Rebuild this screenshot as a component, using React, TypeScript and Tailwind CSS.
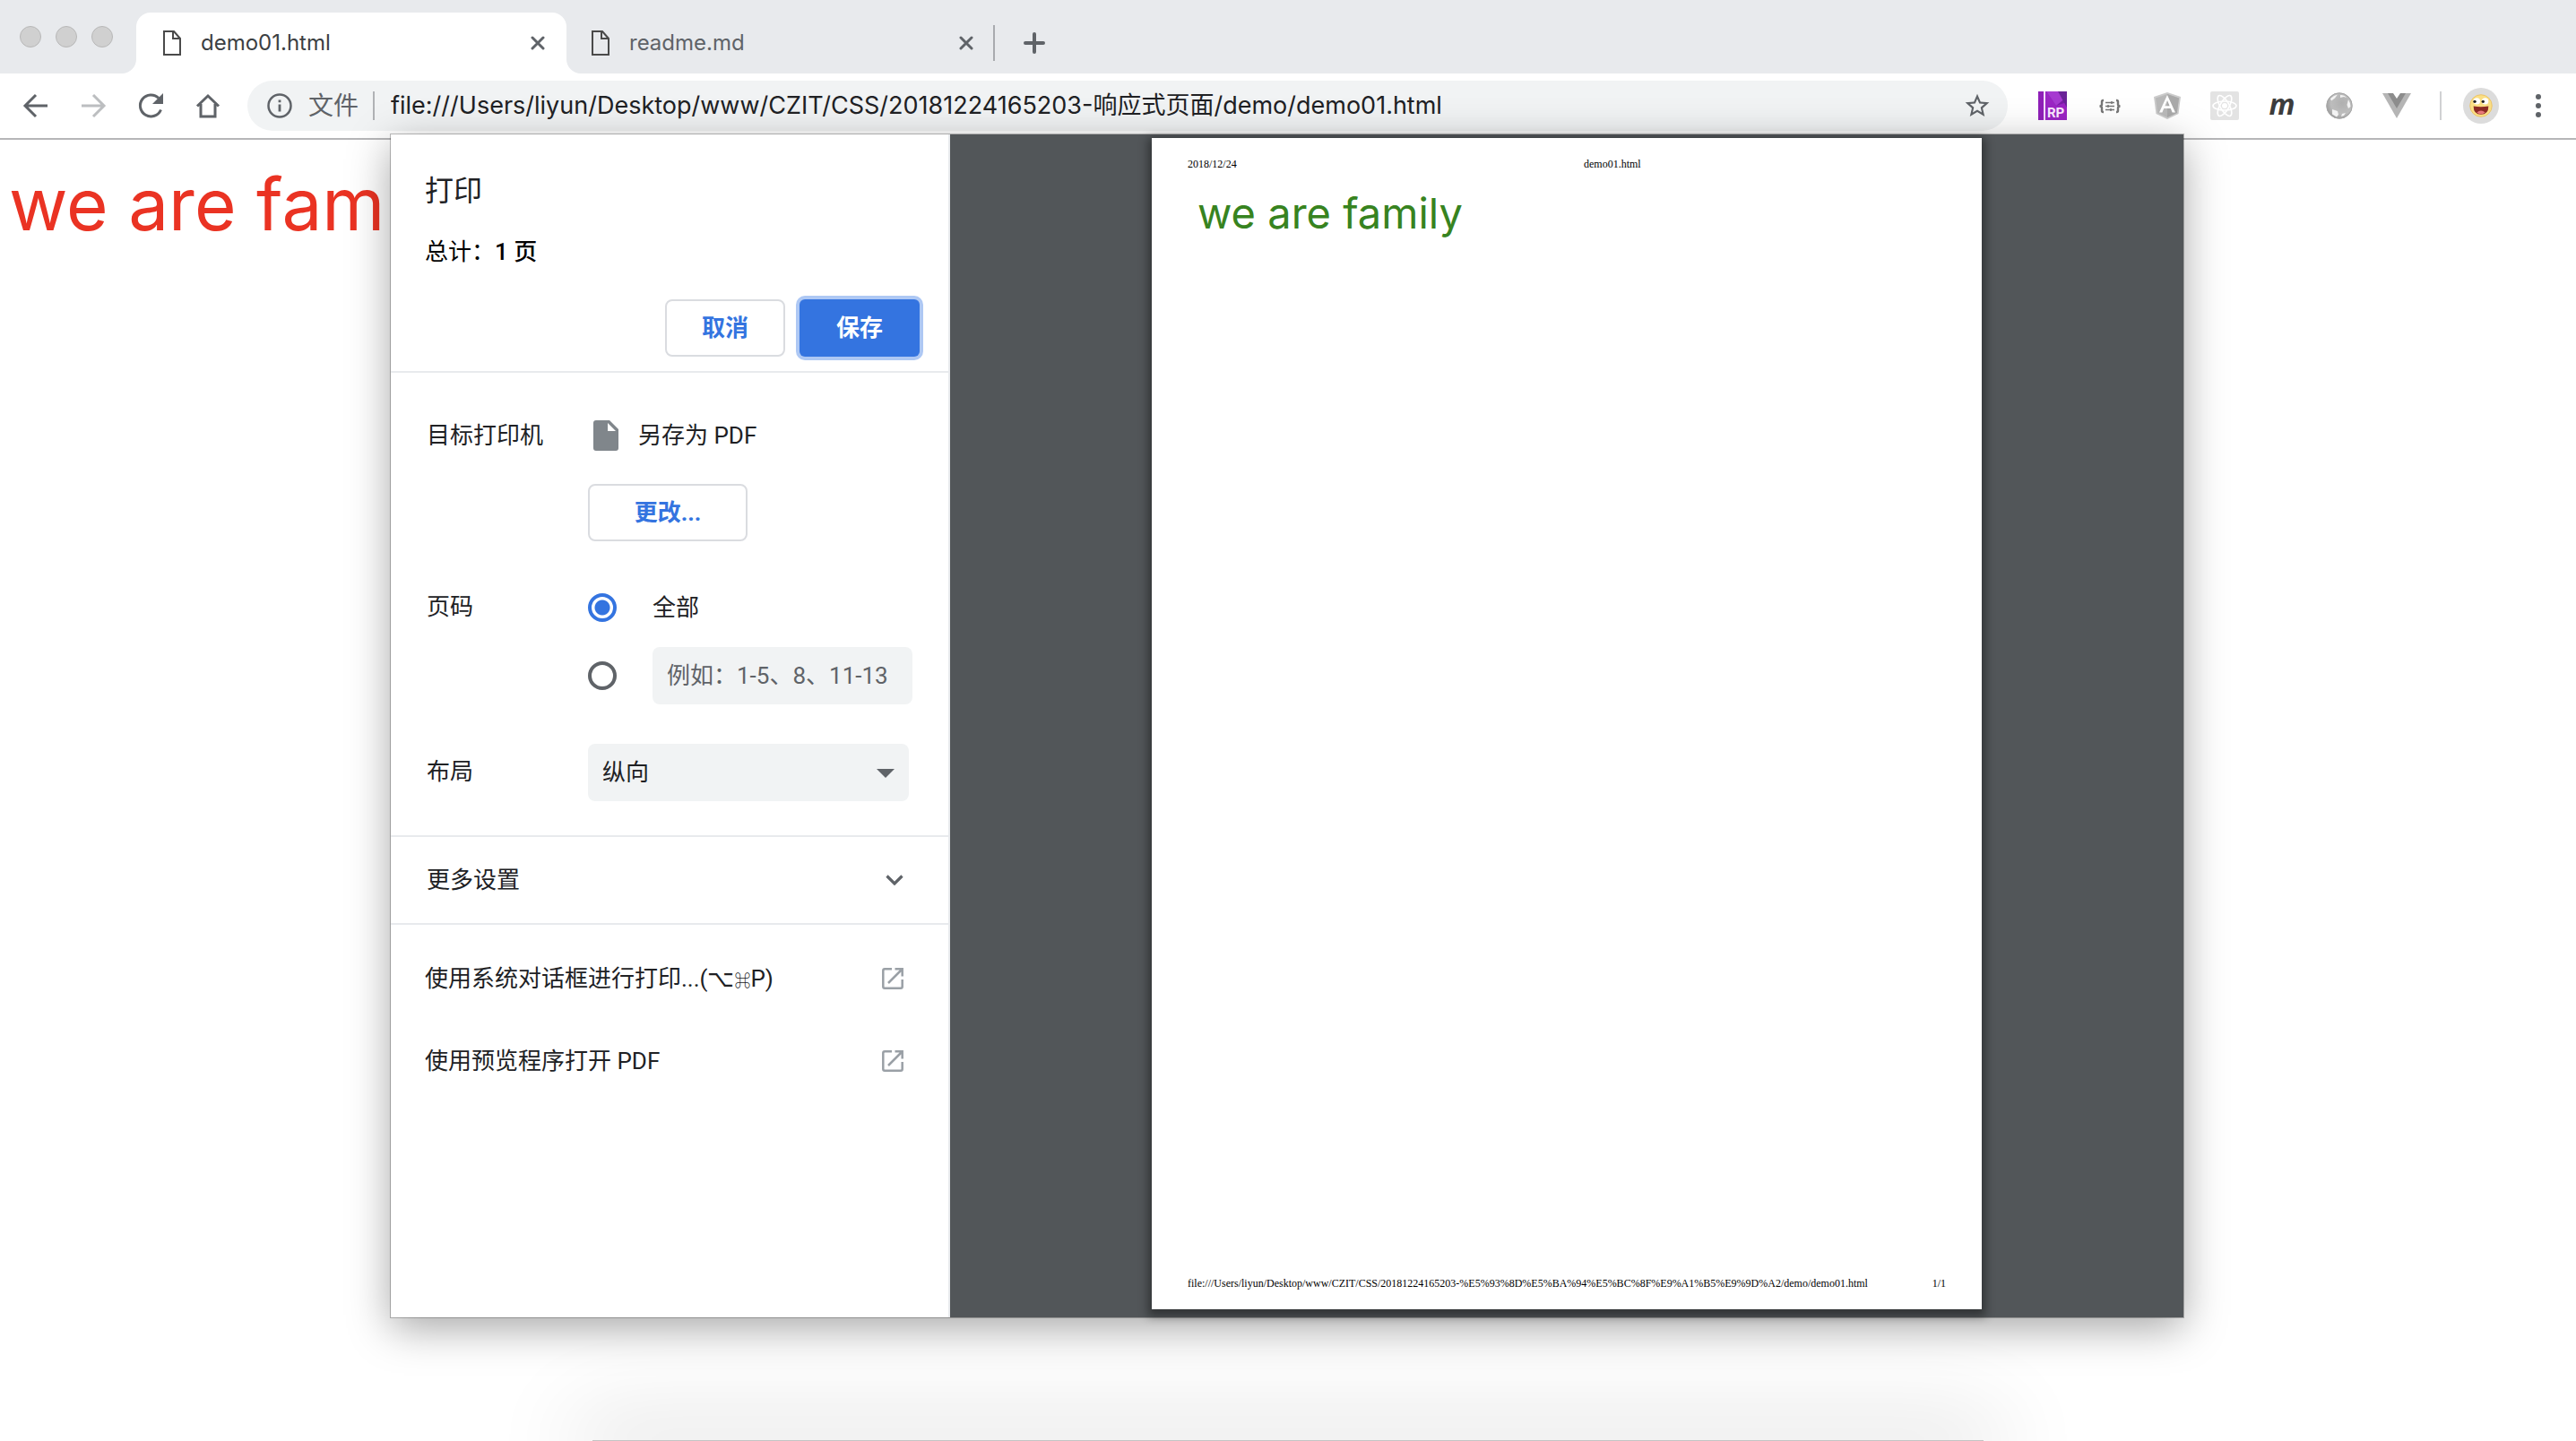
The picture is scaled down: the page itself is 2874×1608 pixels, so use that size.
import type { ReactNode } from "react";

const UI = "font-['Inter','Noto_Sans_CJK_SC',sans-serif]";

function PageIcon() {
  return (
    <svg className="h-7 w-5 shrink-0" viewBox="0 0 20 28" fill="none" stroke="#4a4a4a" strokeWidth="2">
      <path d="M1 1h11l7 8v18H1z" />
      <path d="M11 1v8h8" />
    </svg>
  );
}

function CloseIcon() {
  return (
    <svg className="h-4 w-4" viewBox="0 0 16 16" fill="none" stroke="#5f6368" strokeWidth="3" strokeLinecap="round">
      <path d="M2 2l12 12M14 2L2 14" />
    </svg>
  );
}

function Tab({ title, active }: { title: string; active?: boolean }) {
  return (
    <div className={active ? "relative flex h-[68px] w-[480px] items-center rounded-t-2xl bg-white pl-[30px] pr-6" : "flex h-[68px] w-[476px] items-center pl-7 pr-[22px]"}>
      {active && (
        <>
          <svg className="absolute bottom-0 -left-4 h-4 w-4" viewBox="0 0 16 16" fill="#fff"><path d="M16 0v16H0A16 16 0 0 0 16 0z" /></svg>
          <svg className="absolute bottom-0 -right-4 h-4 w-4" viewBox="0 0 16 16" fill="#fff"><path d="M0 0v16h16A16 16 0 0 1 0 0z" /></svg>
        </>
      )}
      <PageIcon />
      <span className={active ? "ml-[22px] flex-1 text-2xl text-[#3c4043]" : "ml-[22px] flex-1 text-2xl text-[#5f6368]"}>{title}</span>
      <button type="button" aria-label={`Close ${title}`}><CloseIcon /></button>
    </div>
  );
}

function TabStrip() {
  return (
    <header className="flex h-[82px] items-end bg-[#e8eaed]">
      <div className="flex h-full w-[152px] items-center gap-4 pl-[22px]">
        {["close", "minimize", "zoom"].map((n) => (
          <button key={n} type="button" aria-label={n} className="h-6 w-6 rounded-full border border-[#b8b8b8] bg-[#d0d0d0]" />
        ))}
      </div>
      <Tab title="demo01.html" active />
      <Tab title="readme.md" />
      <div className="flex h-[68px] items-center gap-8">
        <div className="h-10 w-0.5 bg-[#a9abaf]" />
        <button type="button" aria-label="New tab">
          <svg className="h-6 w-6" viewBox="0 0 24 24" stroke="#5f6368" strokeWidth="4" strokeLinecap="round"><path d="M12 2v20M2 12h20" /></svg>
        </button>
      </div>
    </header>
  );
}

function NavButton({ label, children }: { label: string; children: ReactNode }) {
  return <button type="button" aria-label={label} className="flex h-8 w-8 items-center justify-center">{children}</button>;
}

function ReactMark() {
  return (
    <svg className="h-8 w-8" viewBox="0 0 32 32">
      <rect width="32" height="32" rx="2" fill="#e3e3e3" />
      <g fill="none" stroke="#fff" strokeWidth="1.6">
        <ellipse cx="16" cy="16" rx="13" ry="5" />
        <ellipse cx="16" cy="16" rx="13" ry="5" transform="rotate(60 16 16)" />
        <ellipse cx="16" cy="16" rx="13" ry="5" transform="rotate(120 16 16)" />
      </g>
      <circle cx="16" cy="16" r="3" fill="#fff" />
    </svg>
  );
}

function Extensions() {
  return (
    <div className="flex items-center gap-8">
      <NavButton label="Axure RP">
        <svg className="h-8 w-8" viewBox="0 0 32 32">
          <rect width="32" height="32" fill="#9b25c4" />
          <path d="M9 0h23v12L20 16z" fill="#7a1fa6" />
          <path d="M9 0l11 16L32 6V0z" fill="#a63ad0" />
          <path d="M22 0h10v18z" fill="#6a2397" />
          <path d="M0 0h6v32H0z" fill="#8f1fb8" />
          <path d="M6 0h2v32H6z" fill="#f3dcfa" />
          <text x="10" y="29" fontFamily="Roboto" fontWeight="700" fontSize="15" fill="#fbeaff">RP</text>
        </svg>
      </NavButton>
      <NavButton label="JSON formatter">
        <svg className="h-8 w-8" viewBox="0 0 32 32" fill="none" stroke="#777" strokeWidth="2.400">
          <path d="M9 10H8.500q-1.500 0-1.500 1.500v3q0 2-2.500 2q2.500 0 2.500 2v3q0 1.500 1.500 1.500H9M23 10h.500q1.500 0 1.500 1.500v3q0 2 2.500 2q-2.500 0-2.500 2v3q0 1.500-1.500 1.500H23" />
          <path d="M11 12.500h10M11 16.500h10M11 20.500h10M18 11v3M14 15v3M17 19v3" strokeWidth="1.500" />
        </svg>
      </NavButton>
      <NavButton label="Angular">
        <svg className="h-8 w-8" viewBox="0 0 32 32">
          <path d="M16 1l15 5-2.500 19L16 31 3.500 25 1 6z" fill="#cbcbcb" />
          <path d="M16 3l13 4.500-2.200 16.500L16 29 5.200 24 3 7.500z" fill="#b9b9b9" />
          <path d="M16 3l13 4.500-2.200 16.500L16 29z" fill="#a9a9a9" />
          <path d="M16 4L7 23.500h3.400l1.800-4.500h7.600l1.800 4.500H25zM16 10l2.600 6.200h-5.200z" fill="#fff" />
        </svg>
      </NavButton>
      <NavButton label="React"><ReactMark /></NavButton>
      <NavButton label="m"><span className="pb-1 font-['Open_Sans',sans-serif] text-[32px] leading-8 font-bold italic text-[#3c3c3c]">m</span></NavButton>
      <NavButton label="Globe">
        <svg className="h-8 w-8" viewBox="0 0 32 32">
          <defs><radialGradient id="globe" cx="0.6" cy="0.4" r="0.7"><stop offset="0" stopColor="#b0b0b0" /><stop offset="0.6" stopColor="#bdbdbd" /><stop offset="1" stopColor="#929292" /></radialGradient></defs>
          <circle cx="16" cy="16" r="14.500" fill="url(#globe)" />
          <path d="M6 8q4-4 8-4.500l-3 4-4 3zM17 4q5 0 7 3l-3-1-4 1zM26 9q2.500 4 2.500 8l-2.500 2-1.500-4zM8 20l6 2 1 4-2 2.500-5-3zM19 25l4-1-2 3-3 1z" fill="#f3f3f3" />
          <circle cx="16" cy="16" r="14.200" fill="none" stroke="#a6a6a6" />
        </svg>
      </NavButton>
      <NavButton label="Vue">
        <svg className="h-7 w-8" viewBox="0 0 32 28">
          <path d="M0 0h32L16 28z" fill="#b5b5b5" />
          <path d="M6 0h20L16 17z" fill="#8c8c8c" />
          <path d="M12 0h8l-4 6z" fill="#fff" />
        </svg>
      </NavButton>
    </div>
  );
}

function Toolbar() {
  return (
    <div className="flex h-[74px] items-center border-b-2 border-[#b6b6b8] bg-white pl-6 pr-[26px]">
      <div className="flex gap-8">
        <NavButton label="Back">
          <svg className="h-8 w-8" viewBox="0 0 32 32" fill="none" stroke="#5f6368" strokeWidth="3"><path d="M29 16H5M16 4L4 16l12 12" /></svg>
        </NavButton>
        <NavButton label="Forward">
          <svg className="h-8 w-8" viewBox="0 0 32 32" fill="none" stroke="#bcbec0" strokeWidth="3"><path d="M3 16h24M16 4l12 12-12 12" /></svg>
        </NavButton>
        <NavButton label="Reload">
          <svg className="h-8 w-8" viewBox="0 0 32 32"><path d="M27.500 20.500A12 12 0 1 1 25 7.500" fill="none" stroke="#5f6368" strokeWidth="3" /><path d="M30 2v12H18z" fill="#5f6368" /></svg>
        </NavButton>
        <NavButton label="Home">
          <svg className="h-8 w-8" viewBox="0 0 32 32" fill="none" stroke="#5f6368" strokeWidth="3"><path d="M4 16.500L16 5l12 11.500M8 14v14h16V14" /></svg>
        </NavButton>
      </div>
      <div className="ml-7 flex h-14 flex-1 items-center rounded-full bg-[#f1f3f4] pl-[22px] pr-[18px]">
        <svg className="h-7 w-7 shrink-0" viewBox="0 0 28 28"><circle cx="14" cy="14" r="12.500" fill="none" stroke="#5f6368" strokeWidth="2.500" /><path d="M12.600 12.500h2.800v8h-2.800zM12.600 7.500h2.800v2.800h-2.800z" fill="#5f6368" /></svg>
        <span className="ml-[18px] text-[28px] text-[#5f6368]">文件</span>
        <div className="ml-4 h-8 w-0.5 bg-[#b0b2b5]" />
        <input aria-label="Address" className="ml-[18px] min-w-0 flex-1 bg-transparent text-[27px] text-[#202124] outline-none" defaultValue="file:///Users/liyun/Desktop/www/CZIT/CSS/20181224165203-响应式页面/demo/demo01.html" />
        <button type="button" aria-label="Bookmark">
          <svg className="h-8 w-8" viewBox="0 0 24 24" fill="#5f6368"><path d="M22 9.240l-7.190-.620L12 2 9.190 8.630 2 9.240l5.460 4.730L5.820 21 12 17.270 18.180 21l-1.630-7.030L22 9.240zM12 15.400l-3.760 2.270 1-4.280-3.320-2.880 4.380-.380L12 6.100l1.710 4.040 4.380.380-3.320 2.880 1 4.280L12 15.400z" /></svg>
        </button>
      </div>
      <div className="ml-[34px]"><Extensions /></div>
      <div className="ml-8 h-8 w-0.5 bg-[#d0d1d3]" />
      <button type="button" aria-label="Profile" className="ml-6 flex h-10 w-10 items-center justify-center rounded-full bg-[#dcdcdc]">
        <svg className="h-[26px] w-[26px]" viewBox="0 0 28 28">
          <circle cx="14" cy="14" r="13.200" fill="#fadf85" stroke="#ecc062" />
          <ellipse cx="9" cy="8.500" rx="4" ry="3.800" fill="#fff" /><ellipse cx="19" cy="8.500" rx="4" ry="3.800" fill="#fff" />
          <circle cx="6.500" cy="9" r="1.800" fill="#222" /><circle cx="16.500" cy="9" r="1.800" fill="#222" />
          <path d="M5 14.500q9 1.500 18 0q0 10-9 10t-9-10z" fill="#8c2a24" /><path d="M9 22q5-4 10 0-5 4-10 0z" fill="#e8787a" />
        </svg>
      </button>
      <button type="button" aria-label="Menu" className="ml-7 flex h-8 w-8 flex-col items-center justify-center gap-1">
        <span className="h-1.5 w-1.5 rounded-full bg-[#5f6368]" />
        <span className="h-1.5 w-1.5 rounded-full bg-[#5f6368]" />
        <span className="h-1.5 w-1.5 rounded-full bg-[#5f6368]" />
      </button>
    </div>
  );
}

function OpenIcon() {
  return (
    <svg className="h-6 w-6" viewBox="0 0 24 24" fill="none" stroke="#9aa0a6" strokeWidth="2.500">
      <path d="M11 1.300H3Q1.300 1.300 1.300 3v18q0 1.700 1.700 1.700h18q1.700 0 1.700-1.700v-8M7 17L22 2M14.500 1.300h8.200v8.200" />
    </svg>
  );
}

function OpenRow({ children }: { children: ReactNode }) {
  return (
    <button type="button" className="flex h-[92px] w-full items-center justify-between pl-[38px] pr-[50px] text-left">
      <span>{children}</span>
      <OpenIcon />
    </button>
  );
}

const RADIO = "h-8 w-8 shrink-0 appearance-none rounded-full border-4 border-[#5f6368] bg-white checked:border-[#3474e0] checked:bg-[radial-gradient(circle,#3474e0_8px,white_9px)]";
const OUTLINE = "h-16 rounded-lg border-2 border-[#dadce0] font-bold text-[#3474e0]";

function Settings() {
  return (
    <form className="flex w-[624px] shrink-0 flex-col border-r-2 border-[#e8eaed] bg-white font-['Roboto','Noto_Sans_CJK_SC',sans-serif] text-[26px] leading-8 text-[#202124]">
      <div className="flex h-[266px] flex-col border-b-2 border-[#e8eaed] pl-[38px] pr-[32px] pt-[43px]">
        <h1 className="text-[32px] leading-10">打印</h1>
        <p className="mt-8 text-black">总计：<b className="font-medium">1 页</b></p>
        <div className="mt-[37px] flex justify-end gap-4">
          <button type="button" className={`${OUTLINE} w-[134px]`}>取消</button>
          <button type="button" className="h-16 w-[134px] rounded-md bg-[#3474e0] font-bold text-white ring-4 ring-[#aec8f4]">保存</button>
        </div>
      </div>
      <div className="grid grid-cols-[180px_1fr] border-b-2 border-[#e8eaed] pl-10 pr-10 pt-[54px] pb-[38px]">
        <span>目标打印机</span>
        <div>
          <div className="flex h-8 items-center">
            <svg className="ml-1.5 h-[34px] w-7" viewBox="0 0 28 34"><path d="M3 0h15l10 10v21q0 3-3 3H3q-3 0-3-3V3q0-3 3-3z" fill="#80868b" /><path d="M16 3v9h9z" fill="#fff" /></svg>
            <span className="ml-[22px]">另存为 PDF</span>
          </div>
          <button type="button" className={`${OUTLINE} mt-[38px] w-[178px]`}>更改...</button>
        </div>
        <span className="mt-[57px]">页码</span>
        <div className="mt-[58px]">
          <label className="flex items-center gap-10"><input type="radio" name="pages" defaultChecked className={RADIO} />全部</label>
          <div className="mt-7 flex items-center gap-10">
            <input type="radio" name="pages" aria-label="自定义页码" className={RADIO} />
            <input aria-label="页码范围" placeholder="例如：1-5、8、11-13" className="h-16 w-[290px] rounded-lg bg-[#f1f3f4] px-4 placeholder:text-[#5f6368]" />
          </div>
        </div>
        <label htmlFor="layout" className="mt-[59px]">布局</label>
        <div className="relative mt-11 w-[358px]">
          <select id="layout" className="h-16 w-full appearance-none rounded-lg bg-[#f1f3f4] px-4"><option>纵向</option></select>
          <svg className="pointer-events-none absolute top-7 right-4 h-2.5 w-5" viewBox="0 0 20 10"><path d="M0 0h20L10 10z" fill="#5f6368" /></svg>
        </div>
      </div>
      <button type="button" className="flex h-[98px] items-center justify-between border-b-2 border-[#e8eaed] pl-10 pr-[50px]">
        <span>更多设置</span>
        <svg className="h-3 w-5" viewBox="0 0 20 12" fill="none" stroke="#5f6368" strokeWidth="3.200"><path d="M1.500 1.500L10 10l8.500-8.500" /></svg>
      </button>
      <div className="pt-[14px]">
        <OpenRow>使用系统对话框进行打印...(⌥<span className="text-lg">⌘</span>P)</OpenRow>
        <OpenRow>使用预览程序打开 PDF</OpenRow>
      </div>
    </form>
  );
}

function Preview() {
  return (
    <div className="flex flex-1 justify-center bg-[#525659] pt-1 pb-[9px]">
      <article className="flex w-[926px] flex-col bg-white px-10 text-black shadow-[0_4px_10px_4px_rgba(0,0,0,0.4)]">
        <div className="flex pt-[21px] font-['Liberation_Serif',serif] text-xs leading-4">
          <span className="w-[442px]">2018/12/24</span>
          <span>demo01.html</span>
        </div>
        <p className="flex-1 pl-[11px] pt-[17px] font-['Inter',sans-serif] text-[47px] leading-[60px] text-[#378320]">we are family</p>
        <div className="flex justify-between pb-[21px] font-['Liberation_Serif',serif] text-xs leading-4">
          <span>file:///Users/liyun/Desktop/www/CZIT/CSS/20181224165203-%E5%93%8D%E5%BA%94%E5%BC%8F%E9%A1%B5%E9%9D%A2/demo/demo01.html</span>
          <span>1/1</span>
        </div>
      </article>
    </div>
  );
}

export default function App() {
  return (
    <div className={`relative h-screen overflow-hidden bg-white ${UI}`}>
      <TabStrip />
      <Toolbar />
      <main className="px-2.5 pt-6 text-[80px] leading-[96px] whitespace-nowrap text-[#ea3323]">we are fam</main>
      <div className="absolute inset-x-0 -bottom-px mx-auto h-0.5 w-[1552px] bg-[#c4c4c4] shadow-[0_0_100px_20px_rgba(0,0,0,0.16)]" />
      <div className="absolute inset-x-0 top-[150px] flex justify-center pr-0.5">
        <section role="dialog" aria-label="打印" className="flex h-[1320px] w-[2000px] shadow-[0_0_0_1px_rgba(0,0,0,0.25),0_12px_44px_rgba(0,0,0,0.35)]">
          <Settings />
          <Preview />
        </section>
      </div>
    </div>
  );
}
